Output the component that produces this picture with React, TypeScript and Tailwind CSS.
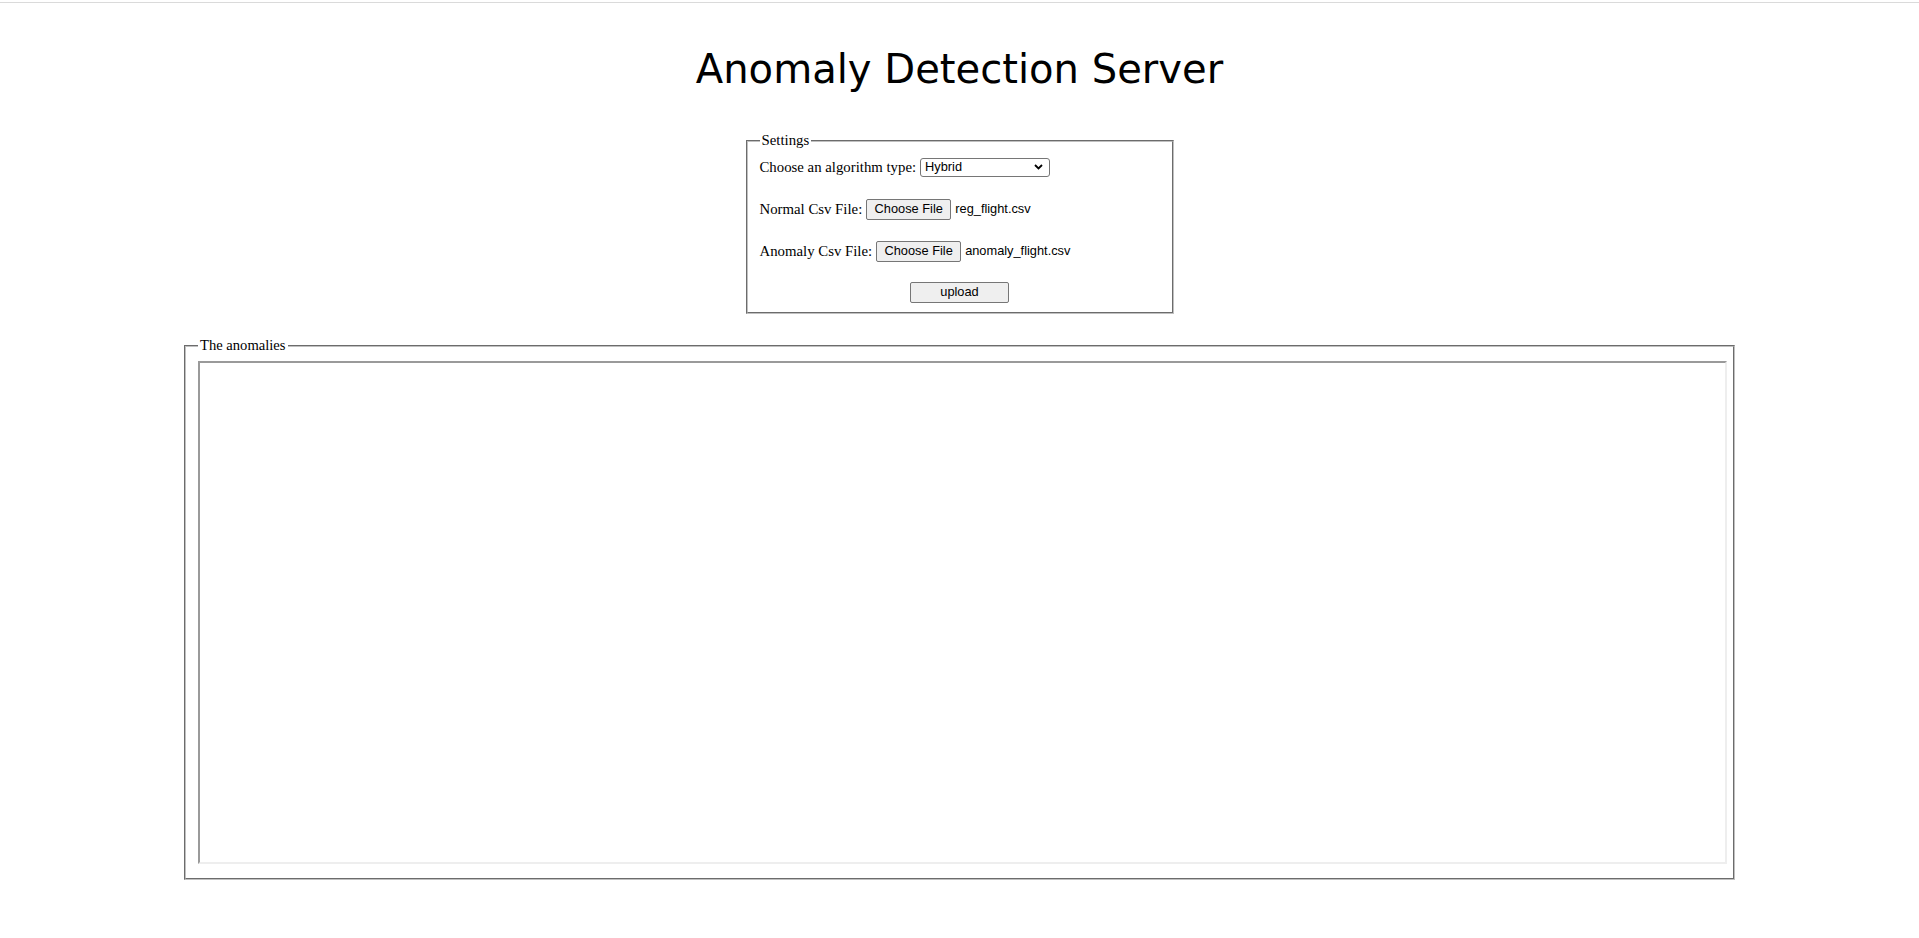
import React from 'react';

const Chevron = () => (
  <svg width="9" height="6" viewBox="0 0 9 6" className="block">
    <path d="M1 1 L4.5 4.5 L8 1" fill="none" stroke="#000" strokeWidth="1.8" />
  </svg>
);

const FakeButton: React.FC<{ label: string; width: string }> = ({ label, width }) => (
  <div
    className={`flex h-[21px] ${width} items-center justify-center rounded-[2px] border border-[#767676] bg-[#efefef] font-['Liberation_Sans',Arial,sans-serif] text-[12.8px] leading-none text-black`}
  >
    {label}
  </div>
);

const FileRow: React.FC<{ label: string; file: string; className?: string }> = ({ label, file, className }) => (
  <div className={`flex h-[22px] items-center ${className ?? ''}`}>
    <span>{label}</span>
    <div className="ml-[4px]">
      <FakeButton label="Choose File" width="w-[85px]" />
    </div>
    <span className="ml-[4px] font-['Liberation_Sans',Arial,sans-serif] text-[12.8px]">{file}</span>
  </div>
);

export default function App() {
  return (
    <div className="min-h-screen bg-white pt-[2px] text-black">
      <div className="h-px bg-[#dadada]" />

      <h1 className="mt-[43px] text-center font-['DejaVu_Sans',Verdana,sans-serif] text-[40.1px] leading-[47px]">
        Anomaly Detection Server
      </h1>

      {/* settings */}
      <fieldset className="mx-auto mt-[39px] block w-[428px] border-2 border-[#c0c0c0] [--tw-border-style:groove] [border-style:groove] px-[12px] pt-[7px] pb-[9px] font-['Liberation_Serif','Times_New_Roman',serif] text-[14.8px]">
        <legend className="px-[2px] leading-[17px]">Settings</legend>

        <div className="flex h-[22px] items-center">
          <span>Choose an algorithm type:</span>
          <div className="ml-[4px] flex h-[19px] w-[130px] items-center justify-between rounded-[3px] border border-[#767676] bg-white pl-[4px] pr-[6px] font-['Liberation_Sans',Arial,sans-serif] text-[12.8px]">
            <span>Hybrid</span>
            <Chevron />
          </div>
        </div>

        <FileRow label="Normal Csv File:" file="reg_flight.csv" className="mt-[20px]" />
        <FileRow label="Anomaly Csv File:" file="anomaly_flight.csv" className="mt-[20px]" />

        <div className="mt-[19px] flex h-[22px] items-center justify-center">
          <FakeButton label="upload" width="w-[99px]" />
        </div>
      </fieldset>

      {/* results */}
      <fieldset className="mx-auto mt-[23px] block w-[1551px] border-2 border-[#c0c0c0] [--tw-border-style:groove] [border-style:groove] pl-[12px] pr-[6px] pt-[7px] pb-[14px] font-['Liberation_Serif','Times_New_Roman',serif] text-[14.6px]">
        <legend className="px-[2px] leading-[17px]">The anomalies</legend>
        <div className="h-[503px] w-[1529px] border-2 border-t-[#9a9a9a] border-l-[#9a9a9a] border-r-[#eeeeee] border-b-[#eeeeee] bg-white" />
      </fieldset>
    </div>
  );
}
